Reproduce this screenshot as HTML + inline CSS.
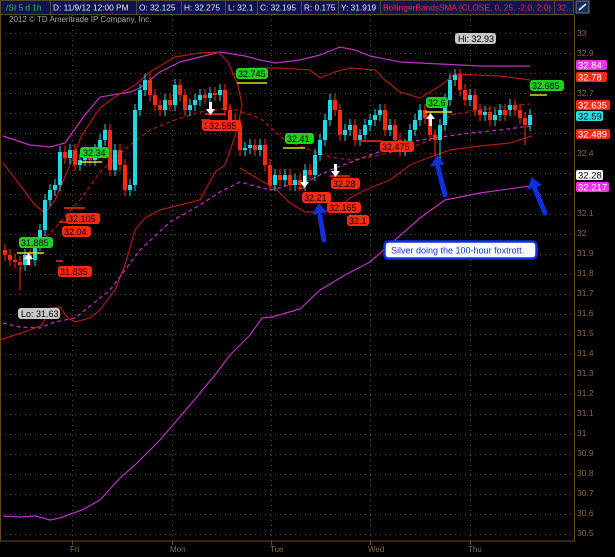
<!DOCTYPE html>
<html><head><meta charset="utf-8"><style>
html,body{margin:0;padding:0;background:#000;width:615px;height:557px;overflow:hidden;font-family:"Liberation Sans",sans-serif}
svg{position:absolute;left:0;top:0}
</style></head><body>
<svg width="615" height="557" viewBox="0 0 615 557" font-family="Liberation Sans, sans-serif">
<rect width="615" height="557" fill="#000"/>
<!-- header -->
<rect x="0" y="0" width="573" height="14" fill="#0e1450"/>
<g stroke="#5a4a2a" fill="none" stroke-width="1">
<path d="M0.5 0.5H573.5V14.5H0.5z M50.5 0V14 M136.5 0V14 M181.5 0V14 M225.5 0V14 M257.5 0V14 M301.5 0V14 M338.5 0V14 M380.5 0V14 M554.5 0V14"/>
</g>
<g font-size="8.3" fill="#e8e8f0">
<text x="6" y="10.5" fill="#28c828">/SI 5 d 1h</text>
<text x="53" y="10.5">D: 11/9/12 12:00 PM</text>
<text x="139" y="10.5">O: 32.125</text>
<text x="184" y="10.5">H: 32.275</text>
<text x="228" y="10.5">L: 32.1</text>
<text x="260" y="10.5">C: 32.195</text>
<text x="304" y="10.5">R: 0.175</text>
<text x="341" y="10.5">Y: 31.919</text>
<text x="383" y="10.5" fill="#ff2a2a" textLength="168" lengthAdjust="spacingAndGlyphs">BollingerBandsSMA (CLOSE, 0, 25, -2.0, 2.0)</text>
<text x="557" y="10.5" fill="#ff2a2a">32...</text>
</g>
<rect x="576" y="1" width="13" height="12" fill="#1a2a5a" stroke="#6a7a9a"/>
<path d="M579 10L586 4" stroke="#cfe" stroke-width="1.5"/>
<text x="9" y="22" font-size="8" fill="#a8a8a8">2012 © TD Ameritrade IP Company, Inc.</text>
<!-- axes -->
<path d="M574.5 15V541H0 M0.5 15V541" stroke="#6b4a18" stroke-width="1" fill="none"/>
<g stroke="#6b4a18" stroke-width="1" stroke-dasharray="1 4" fill="none">
<path d="M0 33.5H574M0 53.5H574M0 73.5H574M0 93.5H574M0 113.5H574M0 133.5H574M0 153.5H574M0 173.5H574M0 194.5H574M0 214.5H574M0 234.5H574M0 254.5H574M0 274.5H574M0 294.5H574M0 314.5H574M0 334.5H574M0 354.5H574M0 374.5H574M0 394.5H574M0 414.5H574M0 434.5H574M0 454.5H574M0 474.5H574M0 494.5H574M0 514.5H574M0 534.5H574"/>
<path d="M72.5 15V541M172.5 15V541M271.5 15V541M370.5 15V541M470.5 15V541"/>
</g>
<g stroke="#6b4a18"><path d="M72.5 541v4M172.5 541v4M271.5 541v4M370.5 541v4M470.5 541v4"/></g>
<g font-size="8" fill="#8a6a3a">
<text x="70" y="552">Fri</text><text x="170" y="552">Mon</text><text x="270" y="552">Tue</text><text x="368" y="552">Wed</text><text x="468" y="552">Thu</text>
</g>
<g font-size="8.5" fill="#8a6a3a">
<text x="577" y="36">33</text><text x="577" y="56">32.9</text><text x="577" y="96">32.7</text>
<text x="577" y="156">32.4</text><text x="577" y="216">32.1</text><text x="577" y="236">32</text><text x="577" y="256">31.9</text>
<text x="577" y="276">31.8</text><text x="577" y="296">31.7</text><text x="577" y="316">31.6</text><text x="577" y="336">31.5</text>
<text x="577" y="356">31.4</text><text x="577" y="376">31.3</text><text x="577" y="396">31.2</text><text x="577" y="416">31.1</text>
<text x="577" y="436">31</text><text x="577" y="456">30.9</text><text x="577" y="476">30.8</text><text x="577" y="496">30.7</text>
<text x="577" y="516">30.6</text><text x="577" y="536">30.5</text>
</g>
<!-- bands -->
<g fill="none" stroke-width="1.2">
<polyline stroke="#c030c0" points="3,136 30,145 50,147 65,143 85,115 100,97 130,92 140,88 160,72 180,62 200,57 220,52 245,56 260,60 275,63 300,60 320,55 340,47 355,50 370,56 400,62 440,64 480,66 530,66"/>
<polyline stroke="#b01a10" points="3,163 20,185 35,205 45,213 55,200 70,165 82,135 100,108 115,97 135,85 150,72 175,57 200,53 218,52 228,62 238,85 242,105 238,125 232,145 225,165 215,172 200,200 180,205 160,210 145,218 135,230 125,265 115,290 100,310 90,318 75,322 68,318 60,307 50,308 42,325 30,330 15,335 0,340"/>
<polyline stroke="#b01a10" points="232,75 250,68 280,68 310,70 320,78 335,72 350,68 375,70 385,80 400,92 420,98 440,86 455,74 475,75 500,76 530,80"/>
<polyline stroke="#b01a10" points="240,168 260,180 275,188 290,203 305,212 320,212 335,210 350,198 365,190 390,180 410,165 430,157 450,150 480,146 510,143 532,136"/>
<polyline stroke="#b01a10" stroke-dasharray="4 3" points="20,270 40,243 55,228 80,200 100,172 130,145 150,130 175,120 200,112 230,108 260,118 285,140 310,150 330,157 350,160 380,155 410,148 430,140 450,115 480,110 510,106 530,104"/>
<polyline stroke="#c030c0" stroke-dasharray="4 3" points="3,323 20,327 40,328 55,322 75,318 110,290 140,250 170,222 200,205 220,192 240,182 270,190 290,185 310,180 330,170 370,155 400,145 420,140 470,133 500,130 530,126"/>
<polyline stroke="#c030c0" points="3,516 20,517 35,516 50,520 60,518 82,510 100,500 120,478 135,465 160,440 190,405 215,375 230,355 250,335 262,318 272,317 300,309 320,290 345,275 370,262 395,240 420,218 445,200 480,193 530,186"/>
</g>
<!-- candles -->
<path fill="none" stroke="#ff2a10" stroke-width="1" d="M5 244V261M10 249V266M15 254V268M20 256V290M30 249V266M65 146V164M75 144V171M90 149V166M110 124V176M120 144V171M125 159V196M150 74V101M155 89V111M160 99V116M170 94V111M180 79V101M185 89V116M205 89V104M215 87V101M225 84V116M230 104V126M235 114V131M240 119V156M255 139V156M265 139V171M270 159V191M280 169V186M290 169V191M300 174V191M310 164V181M335 94V116M340 104V141M355 119V146M385 104V136M395 119V146M400 134V156M425 104V124M430 112V141M435 129V156M460 69V96M465 84V106M475 89V116M480 104V121M490 106V126M505 104V121M515 99V116M520 104V124M525 112V145"/>
<path fill="#ff2a10" d="M3 250h4v5h-4zM8 255h4v5h-4zM13 260h4v2h-4zM18 262h4v3h-4zM28 255h4v5h-4zM63 152h4v6h-4zM73 150h4v15h-4zM88 155h4v5h-4zM108 130h4v40h-4zM118 150h4v15h-4zM123 165h4v25h-4zM148 80h4v15h-4zM153 95h4v10h-4zM158 105h4v5h-4zM168 100h4v5h-4zM178 85h4v10h-4zM183 95h4v15h-4zM203 95h4v3h-4zM213 93h4v2h-4zM223 90h4v20h-4zM228 110h4v10h-4zM233 120h4v5h-4zM238 125h4v25h-4zM253 145h4v5h-4zM263 145h4v20h-4zM268 165h4v20h-4zM278 175h4v5h-4zM288 175h4v10h-4zM298 180h4v5h-4zM308 170h4v5h-4zM333 100h4v10h-4zM338 110h4v25h-4zM353 125h4v15h-4zM383 110h4v20h-4zM393 125h4v15h-4zM398 140h4v10h-4zM423 110h4v8h-4zM428 118h4v17h-4zM433 135h4v5h-4zM458 75h4v15h-4zM463 90h4v10h-4zM473 95h4v15h-4zM478 110h4v5h-4zM488 112h4v8h-4zM503 110h4v5h-4zM513 105h4v5h-4zM518 110h4v8h-4zM523 118h4v7h-4z"/>
<path fill="none" stroke="#20d8e0" stroke-width="1" d="M25 249V271M35 239V266M40 224V251M45 194V236M50 184V206M55 179V196M60 146V191M70 144V164M80 154V171M85 149V166M95 144V166M100 134V156M105 124V146M115 144V176M130 179V196M135 104V191M140 84V116M145 74V96M165 94V116M175 79V111M190 99V116M195 94V111M200 89V106M210 87V104M220 84V101M245 142V156M250 139V154M260 139V156M275 169V191M285 169V186M295 174V191M305 164V191M315 149V181M320 134V161M325 114V146M330 94V126M345 124V141M350 119V136M360 129V146M365 119V141M370 114V131M375 109V126M380 104V121M390 119V136M405 139V156M410 124V151M415 114V136M420 104V126M440 119V160M445 94V131M450 74V106M455 69V86M470 89V106M485 106V121M495 109V126M500 104V121M510 99V116M530 109V131"/>
<path fill="#20d8e0" d="M23 255h4v10h-4zM33 245h4v15h-4zM38 230h4v15h-4zM43 200h4v30h-4zM48 190h4v10h-4zM53 185h4v5h-4zM58 152h4v33h-4zM68 150h4v8h-4zM78 160h4v5h-4zM83 155h4v5h-4zM93 150h4v10h-4zM98 140h4v10h-4zM103 130h4v10h-4zM113 150h4v20h-4zM128 185h4v5h-4zM133 110h4v75h-4zM138 90h4v20h-4zM143 80h4v10h-4zM163 100h4v10h-4zM173 85h4v20h-4zM188 105h4v5h-4zM193 100h4v5h-4zM198 95h4v5h-4zM208 93h4v5h-4zM218 90h4v5h-4zM243 148h4v2h-4zM248 145h4v3h-4zM258 145h4v5h-4zM273 175h4v10h-4zM283 175h4v5h-4zM293 180h4v5h-4zM303 170h4v15h-4zM313 155h4v20h-4zM318 140h4v15h-4zM323 120h4v20h-4zM328 100h4v20h-4zM343 130h4v5h-4zM348 125h4v5h-4zM358 135h4v5h-4zM363 125h4v10h-4zM368 120h4v5h-4zM373 115h4v5h-4zM378 110h4v5h-4zM388 125h4v5h-4zM403 145h4v5h-4zM408 130h4v15h-4zM413 120h4v10h-4zM418 110h4v10h-4zM438 125h4v15h-4zM443 100h4v25h-4zM448 80h4v20h-4zM453 75h4v5h-4zM468 95h4v5h-4zM483 112h4v3h-4zM493 115h4v5h-4zM498 110h4v5h-4zM508 105h4v5h-4zM528 115h4v10h-4z"/>
<!-- marker lines -->
<g stroke-width="1.5">
<path stroke="#d8e020" d="M17 253H44M80 162H102M237 83H267M283 148H305M425 112H452M530 95H547"/>
<path stroke="#ff2a10" d="M64 208H85M59 222H70M56 261H63M205 114H225M201 120H210M298 188H305M330 176H350M360 141H382"/>
</g>
<!-- labels -->
<g font-size="9">
<rect x="19" y="237" width="34" height="11" rx="3" fill="#20d020"/><text x="21" y="246" fill="#000">31.885</text>
<rect x="80" y="147" width="29" height="11" rx="3" fill="#20d020"/><text x="83" y="156" fill="#000">32.34</text>
<rect x="236" y="68" width="32" height="11" rx="3" fill="#20d020"/><text x="238" y="77" fill="#000">32.745</text>
<rect x="285" y="133" width="29" height="11" rx="3" fill="#20d020"/><text x="287" y="142" fill="#000">32.41</text>
<rect x="426" y="97" width="22" height="11" rx="3" fill="#20d020"/><text x="428" y="106" fill="#000">32.6</text>
<rect x="530" y="80" width="34" height="11" rx="3" fill="#20d020"/><text x="532" y="89" fill="#000">32.685</text>
<rect x="66" y="213" width="34" height="11" rx="3" fill="#ff2a10"/><text x="68" y="222" fill="#000">32.105</text>
<rect x="62" y="226" width="29" height="11" rx="3" fill="#ff2a10"/><text x="64" y="235" fill="#000">32.04</text>
<rect x="58" y="266" width="34" height="11" rx="3" fill="#ff2a10"/><text x="60" y="275" fill="#000">31.835</text>
<rect x="202" y="120" width="30" height="11" rx="3" fill="#ff2a10"/><text x="204" y="129" fill="#000">32.55</text>
<rect x="207" y="120" width="34" height="11" rx="3" fill="#ff2a10"/><text x="209" y="129" fill="#000">32.585</text>
<rect x="302" y="192" width="29" height="11" rx="3" fill="#ff2a10"/><text x="304" y="201" fill="#000">32.21</text>
<rect x="331" y="178" width="29" height="11" rx="3" fill="#ff2a10"/><text x="333" y="187" fill="#000">32.28</text>
<rect x="327" y="202" width="34" height="11" rx="3" fill="#ff2a10"/><text x="329" y="211" fill="#000">32.165</text>
<rect x="347" y="215" width="22" height="11" rx="3" fill="#ff2a10"/><text x="349" y="224" fill="#000">32.1</text>
<rect x="380" y="141" width="34" height="11" rx="3" fill="#ff2a10"/><text x="382" y="150" fill="#000">32.475</text>
<rect x="18" y="308" width="42" height="11" rx="3" fill="#c8c8c8"/><text x="21" y="317" fill="#000">Lo: 31.63</text>
<rect x="455" y="33" width="41" height="11" rx="3" fill="#c8c8c8"/><text x="458" y="42" fill="#000">Hi: 32.93</text>
</g>
<!-- arrows white -->
<g fill="#fff">
<path d="M27 265h3v-6h3l-4.5-6-4.5 6h3z"/><path d="M209 102h3v7h3l-4.5 6-4.5-6h3z"/>
<path d="M303 176h3v6h3l-4.5 6-4.5-6h3z"/><path d="M334 164h3v7h3l-4.5 6-4.5-6h3z"/>
<path d="M429 126h3v-7h3l-4.5-6-4.5 6h3z"/>
</g>
<!-- blue arrows -->
<g stroke="#1030e0" stroke-width="5" stroke-linecap="round" fill="#1030e0">
<path d="M324 240L320 216"/><path d="M313 214l6-10 7 8z" stroke-width="1"/>
<path d="M445 195L438 167"/><path d="M431 166l6-10 7 8z" stroke-width="1"/>
<path d="M545 213L535 189"/><path d="M528 189l4-11 9 7z" stroke-width="1"/>
</g>
<!-- callout -->
<rect x="384.5" y="241.5" width="152" height="17" rx="4" fill="#fff" stroke="#1030f0" stroke-width="2.5"/>
<text x="391" y="253.5" font-size="9" fill="#1030d0">Silver doing the 100-hour foxtrott.</text>
<!-- right labels -->
<g font-size="9.5">
<rect x="576" y="60" width="31" height="10" rx="2" fill="#f030f0"/><text x="578" y="68.5" fill="#fff">32.84</text>
<rect x="576" y="72" width="31" height="10" rx="2" fill="#ff2a10"/><text x="578" y="80.5" fill="#fff">32.78</text>
<rect x="576" y="100" width="34" height="10" rx="2" fill="#ff2a10"/><text x="578" y="108.5" fill="#fff">32.635</text>
<rect x="576" y="111" width="27" height="10" rx="2" fill="#20e0e8"/><text x="578" y="119.5" fill="#000">32.59</text>
<rect x="576" y="129" width="34" height="10" rx="2" fill="#ff2a10"/><text x="578" y="137.5" fill="#fff">32.489</text>
<rect x="576" y="170" width="27" height="10" rx="2" fill="#fff"/><text x="578" y="178.5" fill="#000">32.28</text>
<rect x="576" y="182" width="33" height="10" rx="2" fill="#f030f0"/><text x="578" y="190.5" fill="#fff">32.217</text>
</g>
</svg>
</body></html>
